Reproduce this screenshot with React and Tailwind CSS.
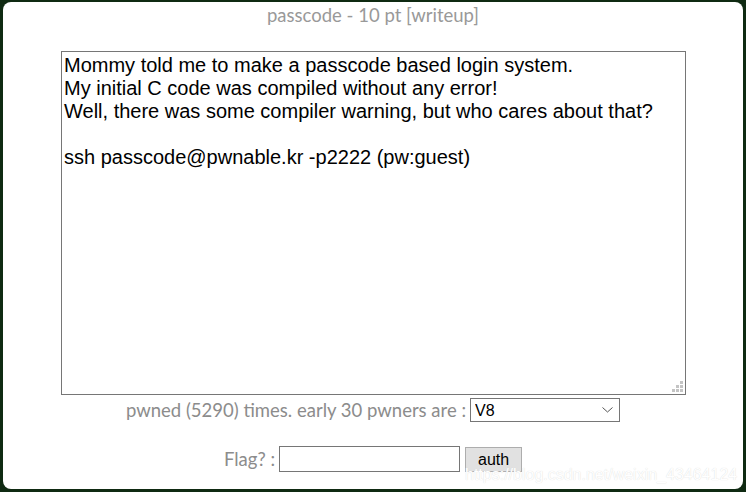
import { useState } from "react";

const desc = `Mommy told me to make a passcode based login system.
My initial C code was compiled without any error!
Well, there was some compiler warning, but who cares about that?

ssh passcode@pwnable.kr -p2222 (pw:guest)`;

// puntitos del agarre de la esquina (col, fila)
const grip = [
  [2, 0],
  [1, 1],
  [2, 1],
  [0, 2],
  [1, 2],
  [2, 2],
];

function App() {
  const [pwner, setPwner] = useState("V8");
  const [flag, setFlag] = useState("");

  return (
    <div className="w-[746px] h-[492px] bg-[#0f2a12] pt-[2px] pl-[3px] overflow-hidden">
      <div className="relative w-[740px] h-[487px] bg-white rounded-[8px] flex flex-col items-center font-['Lato',sans-serif]">
        {/* titulo */}
        <div className="mt-[1px] text-[18.5px] leading-[24px] text-[#999999]">
          passcode - 10 pt [writeup]
        </div>

        <div className="relative mt-[24px] ml-[1px] w-[625px] h-[344px]">
          <textarea
            readOnly
            defaultValue={desc}
            className="w-full h-full resize-none border border-[#767676] p-[2px] text-[20px] leading-[23px] text-black font-['Liberation_Sans',Arial,sans-serif] outline-none"
          />
          <div className="absolute right-[3px] bottom-[3px] w-[11px] h-[11px] pointer-events-none">
            {grip.map(([c, r]) => (
              <div
                key={`${c}-${r}`}
                className="absolute w-[3px] h-[3px] bg-[#c4c4c4]"
                style={{ left: c * 4, top: r * 4 }}
              />
            ))}
          </div>
        </div>

        {/* pwners */}
        <div className="mt-[3px] flex items-center text-[18.5px] leading-[24px] text-[#8c8c8c]">
          <span className="mr-[4px]">pwned (5290) times. early 30 pwners are :</span>
          <div className="relative">
            <select
              value={pwner}
              onChange={(e) => setPwner(e.target.value)}
              className="appearance-none block w-[150px] h-[24px] border border-[#767676] pl-[4px] text-[16px] text-black font-['Liberation_Sans',Arial,sans-serif] bg-white outline-none"
            >
              <option>V8</option>
            </select>
            <svg
              className="absolute right-[7px] top-[9px] pointer-events-none"
              width="11"
              height="6"
              viewBox="0 0 11 6"
            >
              <path d="M0.5 0.5 L5.5 5 L10.5 0.5" fill="none" stroke="#555" strokeWidth="1" />
            </svg>
          </div>
        </div>

        {/* flag */}
        <div className="mt-[24px] flex items-center text-[18.5px] leading-[26px] text-[#8c8c8c]">
          <span className="mr-[4px]">Flag? :</span>
          <input
            value={flag}
            onChange={(e) => setFlag(e.target.value)}
            className="w-[181px] h-[26px] border border-[#767676] bg-white outline-none"
          />
          <button className="ml-[5px] mt-[1px] w-[57px] h-[25px] bg-[#e1e1e1] border border-[#adadad] text-[16px] leading-[23px] text-black font-['Liberation_Sans',Arial,sans-serif]">
            auth
          </button>
        </div>

        {/* marca de agua */}
        <div className="absolute left-[462px] top-[461px] text-[16px] text-white font-['Liberation_Sans',Arial,sans-serif] [text-shadow:0_0_1px_#d4d4d4] pointer-events-none">
          https://blog.csdn.net/weixin_43464124
        </div>
      </div>
    </div>
  );
}

export default App;
